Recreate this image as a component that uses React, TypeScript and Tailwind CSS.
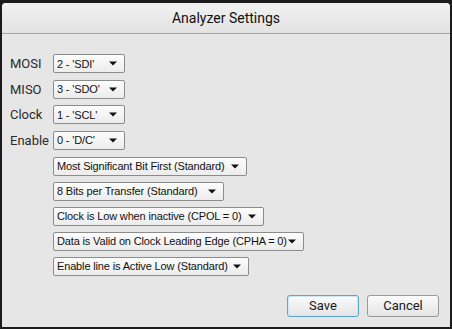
import React from "react";

const Arrow = () => (
  <svg width="8" height="5" viewBox="0 0 8 5" className="shrink-0">
    <path d="M0 0.5 L8 0.5 L4 4.5 Z" fill="#111" />
  </svg>
);

function Select({ label, width }: { label: string; width: number }) {
  return (
    <div
      className="h-[19px] flex items-center justify-between pl-[3px] pr-[7px] border border-[#8c8c8c] rounded-[2px] bg-gradient-to-b from-[#fdfdfd] to-[#ececec] text-[11px] text-[#111] whitespace-nowrap tracking-[-0.15px]"
      style={{ width, fontFamily: '"Liberation Sans", Arial, sans-serif' }}
    >
      <span>{label}</span>
      <Arrow />
    </div>
  );
}

export default function App() {
  const pins = [
    ["MOSI", "2 - 'SDI'"],
    ["MISO", "3 - 'SDO'"],
    ["Clock", "1 - 'SCL'"],
    ["Enable", "0 - 'D/C'"],
  ];
  const opts: [string, number][] = [
    ["Most Significant Bit First (Standard)", 194],
    ["8 Bits per Transfer (Standard)", 171],
    ["Clock is Low when inactive (CPOL = 0)", 211],
    ["Data is Valid on Clock Leading Edge (CPHA = 0)", 251],
    ["Enable line is Active Low (Standard)", 196],
  ];
  return (
    <div className="w-[452px] h-[329px] bg-[#1b1b1b] pt-[3px] pl-[2px] pr-[2px] pb-[2px]">
      <div
        className="w-full h-full flex flex-col bg-[#e6e6e6] rounded-t-[4px] overflow-hidden"
        style={{ fontFamily: "Roboto, sans-serif" }}
      >
        <div className="h-[31px] shrink-0 flex items-center justify-center bg-gradient-to-b from-[#f1f1f1] to-[#e3e3e3] border-b border-[#a5a5a5] text-[14px] text-[#111]">
          Analyzer Settings
        </div>
        <div className="flex flex-col pt-[20px] pl-[8px]">
          <div className="flex flex-col gap-[6px]">
            {pins.map(([l, v]) => (
              <div key={l} className="flex items-center">
                <div className="w-[43px] text-[13px] text-[#2b2b2b]">{l}</div>
                <Select label={v} width={72} />
              </div>
            ))}
          </div>
          <div className="flex flex-col gap-[6px] mt-[7px] pl-[43px]">
            {opts.map(([l, w]) => (
              <Select key={l} label={l} width={w} />
            ))}
          </div>
        </div>
        <div className="mt-auto flex justify-end gap-[8px] pr-[11px] pb-[10px]">
          <button className="w-[72px] h-[22px] rounded-[3px] border border-[#5aa6d6] bg-gradient-to-b from-[#fbfbfb] to-[#e4e4e4] text-[13px] text-[#1a1a1a] shadow-[inset_0_0_0_1px_#cfe8f7]">
            Save
          </button>
          <button className="w-[72px] h-[22px] rounded-[3px] border border-[#9a9a9a] bg-gradient-to-b from-[#fbfbfb] to-[#e4e4e4] text-[13px] text-[#1a1a1a]">
            Cancel
          </button>
        </div>
      </div>
    </div>
  );
}
